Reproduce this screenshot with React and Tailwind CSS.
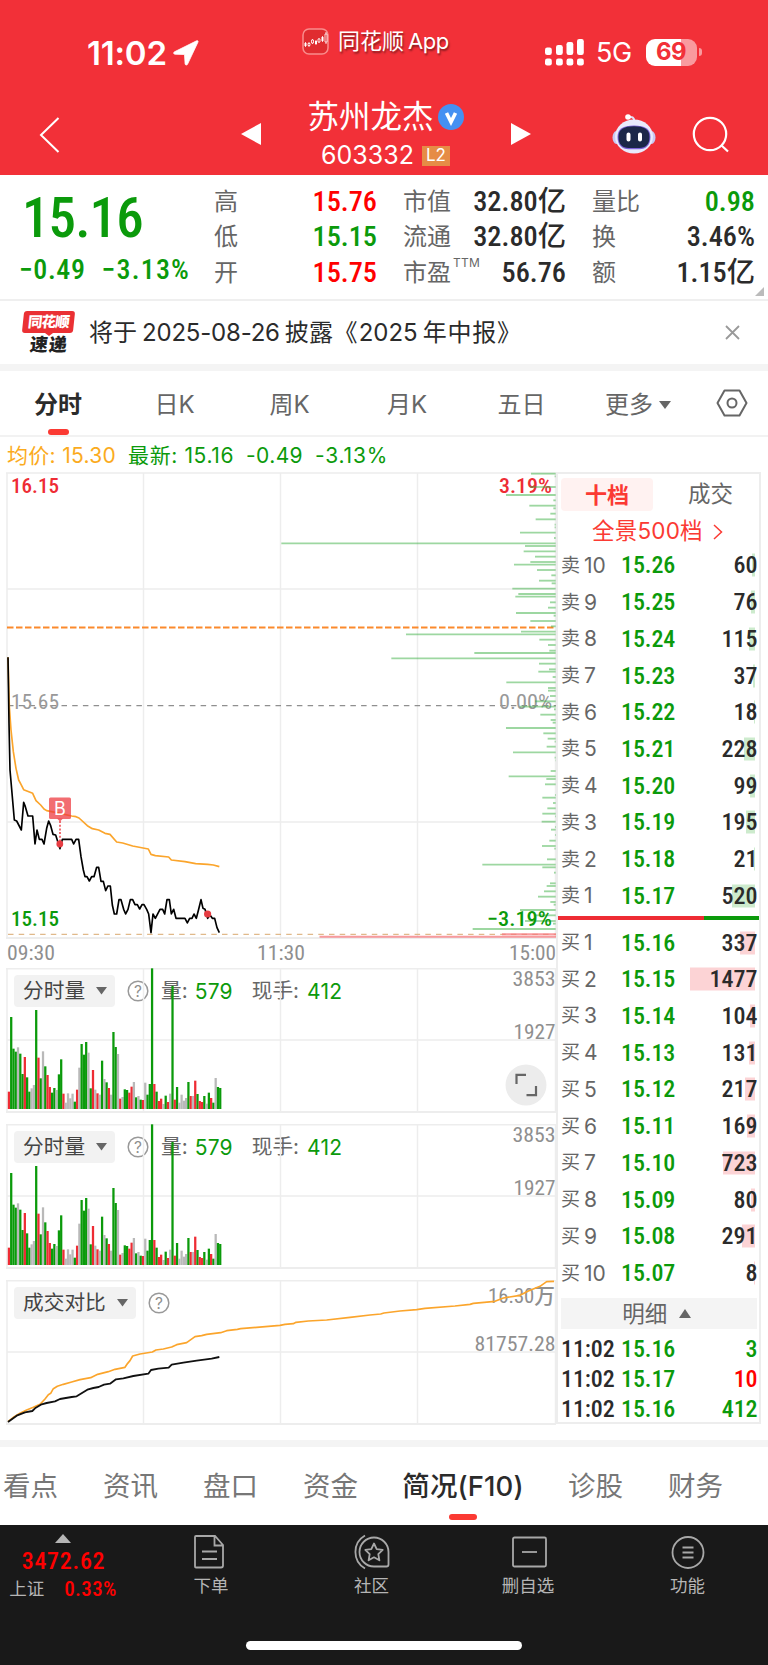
import React from "react";

const sans = "font-['Inter','Noto_Sans_CJK_SC',sans-serif]";
const din = "font-['Roboto','Noto_Sans_CJK_SC',sans-serif] font-stretch-semi-condensed";

const GREEN = "#0b9a0b";
const RED = "#ee2c34";
const GRAY = "#b9b9b9";

const stats = [
  [
    { label: "高", value: "15.76", color: "text-[#ff0000]" },
    { label: "低", value: "15.15", color: "text-[#0b9a0b]" },
    { label: "开", value: "15.75", color: "text-[#ff0000]" },
  ],
  [
    { label: "市值", value: "32.80亿", color: "text-[#2b2b2b]" },
    { label: "流通", value: "32.80亿", color: "text-[#2b2b2b]" },
    { label: "市盈", sup: "TTM", value: "56.76", color: "text-[#2b2b2b]" },
  ],
  [
    { label: "量比", value: "0.98", color: "text-[#0b9a0b]" },
    { label: "换", value: "3.46%", color: "text-[#2b2b2b]" },
    { label: "额", value: "1.15亿", color: "text-[#2b2b2b]" },
  ],
];

const sells = [
  [10, "15.26", 60],
  [9, "15.25", 76],
  [8, "15.24", 115],
  [7, "15.23", 37],
  [6, "15.22", 18],
  [5, "15.21", 228],
  [4, "15.20", 99],
  [3, "15.19", 195],
  [2, "15.18", 21],
  [1, "15.17", 520],
];

const buys = [
  [1, "15.16", 337],
  [2, "15.15", 1477],
  [3, "15.14", 104],
  [4, "15.13", 131],
  [5, "15.12", 217],
  [6, "15.11", 169],
  [7, "15.10", 723],
  [8, "15.09", 80],
  [9, "15.08", 291],
  [10, "15.07", 8],
];

const trades = [
  ["11:02", "15.16", 3, "text-[#0b9a0b]"],
  ["11:02", "15.17", 10, "text-[#ff0000]"],
  ["11:02", "15.16", 412, "text-[#0b9a0b]"],
];

// one entry per minute: r = up, g = down, n = flat
const volumes =
  "r52 g276 g181 g172 n185 g166 g105 r156 g95 g52 n62 n72 g297 r154 g92 n173 g128 r102 r66 g49 g63 n57 g104 g149 r46 n19 n47 n32 n46 g22 r58 n124 g195 g163 g201 n169 g62 r117 n58 r47 n43 g145 n90 g80 r63 n43 g231 g186 n165 r31 n36 g59 g57 r49 r67 n81 g35 n39 g28 r27 n79 g43 g75 g422 r75 g52 r24 r31 n15 g40 r21 n46 g369 r28 g66 n19 n43 n25 n33 g81 r39 n39 r85 g45 r24 r21 g39 n16 g49 r33 g19 n93 g66 g63"
    .split(" ")
    .map((s) => ({ kind: s[0], size: Number(s.slice(1)) / 3 }));

const volumeColors = { r: RED, g: GREEN, n: GRAY };

const pricePoints =
  "24,52 27,250 30,390 43,540 50,543 64,570 71,487 76,500 84,528 98,528 105,612 111,570 118,598 126,598 132,612 140,565 146,543 152,557 159,583 167,585 180,626 187,598 215,598 221,612 228,598 236,598 243,650 250,690 255,710 261,710 268,723 275,710 282,710 290,682 296,682 303,724 310,724 317,752 324,738 331,738 337,795 343,822 350,822 357,779 363,779 371,808 377,822 384,808 391,779 398,779 405,794 412,794 419,807 426,794 432,794 440,808 446,822 453,878 459,822 466,835 480,808 488,808 494,822 501,779 508,779 514,822 521,808 528,835 555,835 562,849 569,835 576,835 582,822 589,835 596,808 603,779 609,805 615,808 623,835 630,825 637,835 644,835 651,863 658,878";

const averagePoints =
  "24,52 28,200 33,270 40,335 48,385 56,420 63,433 71,449 98,460 108,482 122,495 132,507 140,512 180,520 215,528 228,530 237,534 262,557 277,566 296,570 315,580 330,583 350,606 368,609 398,618 445,627 453,643 466,647 506,651 514,660 555,665 587,671 623,673 640,675 658,680";

const yesterdayPoints =
  "24,485 40,472 60,460 80,450 100,442 120,433 135,417 145,404 152,400 160,386 172,379 190,373 215,366 240,359 272,353 293,343 325,335 345,328 375,322 383,310 390,302 398,288 420,282 457,276 468,270 490,267 515,261 530,254 560,248 585,230 605,227 620,223 662,218 680,212 712,208 722,206 770,202 840,196 855,193 880,191 888,187 925,183 980,180 1050,172 1110,165 1142,162 1152,159 1200,153 1250,149 1275,145 1365,138 1410,133 1420,130 1485,124 1510,114 1560,106 1585,93 1620,79 1640,65 1662,64";

const todayPoints =
  "24,486 50,467 75,457 97,453 105,445 125,433 140,429 165,424 180,417 215,411 230,409 262,389 280,384 296,381 312,374 330,371 348,358 370,355 400,348 445,341 453,330 475,326 506,323 515,314 550,308 590,302 635,296 658,291";

// resting orders by price level: [y, left end]
const depth = [
  [41, 783], [49, 854], [81, 780], [105, 708], [121, 850], [137, 778], [145, 850], [161, 841],
  [178, 797], [194, 854], [202, 854], [218, 750], [234, 852], [250, 34], [258, 765], [274, 761],
  [290, 795], [306, 781], [314, 732], [330, 801], [346, 844], [362, 807], [370, 845], [386, 727],
  [402, 745], [410, 736], [427, 840], [443, 834], [459, 738], [467, 851], [483, 781], [499, 843],
  [515, 753], [523, 408], [539, 808], [555, 834], [572, 838], [579, 613], [595, 364], [611, 807],
  [628, 837], [635, 805], [651, 848], [667, 709], [684, 834], [692, 834], [708, 840], [724, 795],
  [740, 749], [748, 852], [764, 811], [780, 842], [788, 848], [804, 708], [820, 820], [836, 833],
  [845, 854], [860, 830], [877, 729], [893, 854], [901, 856], [933, 842], [949, 716], [957, 829],
  [973, 825], [1005, 855], [1013, 817], [1029, 849], [1045, 832], [1061, 817], [1069, 855],
  [1085, 815], [1101, 855], [1109, 843], [1125, 855], [1142, 838], [1158, 816], [1166, 853],
  [1198, 831], [1214, 637], [1222, 817], [1238, 852], [1270, 840], [1278, 830], [1294, 822],
  [1310, 804], [1326, 841], [1334, 851], [1350, 750], [1366, 795], [1383, 765], [1391, 849],
  [1407, 608],
];

function StatusBar() {
  return (
    <div className="flex h-[86px] items-start text-white">
      <div className="mt-[37px] flex h-8 w-[302px] items-center pl-[87px]">
        <span className="text-[33px] leading-8 font-semibold tracking-[-0.2px]">11:02</span>
        <svg className="ml-1.5" width="26" height="26" viewBox="0 0 26 26">
          <path d="M25 2 14.500 24.300c-.6 1.200-2.300.9-2.400-.5L11.500 14.500 2 14.200c-1.600-.1-1.900-1.700-.5-2.400L23.600.8c1-.5 1.800.2 1.400 1.200Z" fill="#fff" stroke="#fff" strokeWidth="0.8" />
        </svg>
      </div>
      <div className="mt-[27px] flex h-7 w-[242px] items-center">
        <svg width="27" height="27" viewBox="0 0 27 27">
          <rect x="1" y="1" width="25" height="25" rx="6" fill="#e02c30" stroke="#f98c8c" strokeWidth="1.5" />
          <path d="M3.500 14v5M7 14v5M10.500 11v5M14 12v5M17 10v5M20.500 8v6M24 4v12" stroke="#fff" strokeWidth="0.8" />
          <path d="M2.500 15h2v3h-2zM13 13h2v3h-2zM19.500 9h2v4h-2z" fill="#fff" />
          <path d="M6 15.500h2v2h-2zM9.500 12h2v3h-2zM16 11h2v3h-2zM23 6h2v8h-2z" fill="#e02c30" stroke="#fff" strokeWidth="0.8" />
        </svg>
        <span className="ml-[9px] flex gap-1 text-[22px] leading-7 [text-shadow:1px_2px_2px_rgba(0,0,0,0.45)]">
          <span>同花顺</span>
          <span className="tracking-[-0.4px]">App</span>
        </span>
      </div>
      <div className="mt-9 flex h-8 items-center">
        <svg width="40" height="28" viewBox="0 0 40 28" fill="#fff">
          <rect x="1" y="9.500" width="6.800" height="7.500" rx="2.200" />
          <rect x="12" y="7" width="6.800" height="10" rx="2.200" />
          <rect x="22.500" y="4" width="6.800" height="13" rx="2.200" />
          <rect x="33" y="1" width="6.800" height="16" rx="2.200" />
          <rect x="1" y="20.500" width="6.800" height="7" rx="2.200" />
          <rect x="12" y="20.500" width="6.800" height="7" rx="2.200" />
          <rect x="22.500" y="20.500" width="6.800" height="7" rx="2.200" />
          <rect x="33" y="20.500" width="6.800" height="7" rx="2.200" />
        </svg>
        <span className="mt-0.5 ml-3 text-[27px] leading-8 tracking-[-0.5px]">5G</span>
        <div className="ml-3.5 flex h-[27px] w-[51px] items-center justify-center rounded-[9px] bg-linear-to-r from-white from-69% to-[#f99a9e] to-69% text-[24px] leading-none font-bold tracking-[-0.5px] text-[#f23038]">
          69
        </div>
        <div className="ml-0.5 h-2 w-[3px] rounded-r-full bg-[#f99a9e]" />
      </div>
    </div>
  );
}

function NavBar() {
  return (
    <div className="flex h-[89px] items-start text-white">
      <svg className="mt-[30px] ml-[39px]" width="22" height="38" viewBox="0 0 22 38">
        <path d="M19.500 2 2 19 19.500 36" fill="none" stroke="#fff" strokeWidth="2" />
      </svg>
      <svg className="mt-[37px] ml-[180px]" width="20" height="22" viewBox="0 0 20 22">
        <path d="M20 0v22L0 11Z" fill="#fff" />
      </svg>
      <div className="flex w-[249px] flex-col items-center">
        <div className="mt-[13px] flex h-9 items-center">
          <span className="text-[31.500px] leading-9">苏州龙杰</span>
          <svg className="ml-1" width="26" height="26" viewBox="0 0 26 26">
            <circle cx="13" cy="13" r="13" fill="#4590f2" />
            <path d="M8.500 9 13 18l4.500-9" fill="none" stroke="#fff" strokeWidth="3.600" />
          </svg>
        </div>
        <div className="mt-1.5 flex h-7 items-center">
          <span className="text-[25px] leading-7">603332</span>
          <span className="mt-0.5 ml-2 flex h-5 w-7 items-center justify-center bg-[#e68c46] text-[17px]">L2</span>
        </div>
      </div>
      <svg className="mt-[37px] ml-px" width="20" height="22" viewBox="0 0 20 22">
        <path d="M0 0v22L20 11Z" fill="#fff" />
      </svg>
      <svg className="mt-[27px] ml-[81px]" width="44" height="42" viewBox="0 0 44 42">
        <path d="M16 4.500c4-1.500 6 0 6.500 4" fill="none" stroke="#dfe3fa" strokeWidth="2" />
        <circle cx="16" cy="4" r="2.800" fill="#fff" />
        <ellipse cx="4.500" cy="24.500" rx="4" ry="6.500" fill="#c9c9f4" />
        <ellipse cx="39.500" cy="24.500" rx="4" ry="6.500" fill="#c9c9f4" />
        <ellipse cx="22" cy="23.500" rx="19" ry="17" fill="#e9eafc" />
        <path d="M22 12.500c11 0 16.500 3.500 16.500 11.500s-4.500 12.200-11 12.200h-11C10 36.200 5.500 32 5.500 24S11 12.500 22 12.500Z" fill="#7d63d8" />
        <path d="M22 13.300c10.500 0 15.500 3.200 15.500 10.700S33.500 35 27.500 35h-11C10.500 35 6.500 31.500 6.500 24S11.500 13.300 22 13.300Z" fill="#1c2748" />
        <path d="M16.500 21.500v5M28 21.500v5" stroke="#fff" strokeWidth="4" strokeLinecap="round" />
      </svg>
      <svg className="mt-[30px] ml-9" width="38" height="38" viewBox="0 0 38 38" fill="none" stroke="#fff" strokeWidth="2.200">
        <circle cx="18" cy="18" r="16.200" />
        <path d="m29 29 7 6.500" />
      </svg>
    </div>
  );
}

function Stats() {
  return (
    <div className="relative flex h-[124px]">
      <div className={`w-[213px] text-[#0b9a0b] ${din}`}>
        <div className="mt-[15px] pl-[22px] text-[55px] leading-[56px] font-medium tracking-[-0.9px]">15.16</div>
        <div className="mt-[9px] flex gap-4 pl-[19px] text-[28px] leading-[30px] font-medium">
          <span className="tracking-[0.6px]">−0.49</span>
          <span className="tracking-[1.2px]">−3.13%</span>
        </div>
      </div>
      <div className="flex gap-[26px] pt-[9px] pl-px">
        {stats.map((column, i) => (
          <div key={i} className="w-[163px]">
            {column.map((item) => (
              <div key={item.label} className="flex h-[35.500px] items-center justify-between">
                <span className="flex text-[24px] leading-none text-[#666]">
                  {item.label}
                  {item.sup && (
                    <sup className="top-0 -mt-1 ml-0.5 text-[12px] leading-none tracking-[0.3px]">{item.sup}</sup>
                  )}
                </span>
                <span className={`text-[28.300px] leading-none font-medium ${din} ${item.color}`}>{item.value}</span>
              </div>
            ))}
          </div>
        ))}
      </div>
      <svg className="absolute right-1 bottom-[3px]" width="9" height="9" viewBox="0 0 9 9">
        <path d="M9 0v9H0Z" fill="#bbb" />
      </svg>
    </div>
  );
}

function Notice() {
  return (
    <div className="flex h-[65px] items-center border-t-2 border-[#efefef]">
      <div className="ml-[22px] flex w-[53px] flex-col items-center">
        <div className="flex h-[22px] w-[51px] -skew-x-6 items-center justify-center rounded-[3px] bg-[#ea3034] text-[14.500px] leading-none font-black tracking-[-0.8px] text-white">
          同花顺
        </div>
        <svg width="8" height="3" viewBox="0 0 8 3">
          <path d="M0 0h8L4 3Z" fill="#ea3034" />
        </svg>
        <div className="-skew-x-6 text-[18px] leading-[18px] font-black tracking-[1px] text-[#222]">速递</div>
      </div>
      <div className="ml-3.5 flex items-center gap-[5px] text-[24px] leading-none text-[#2b2b2b]">
        <span>将于</span>
        <span className="tracking-[-0.2px]">2025-08-26</span>
        <span className="tracking-[0.3px]">披露《</span>
        <span className="-ml-1">2025</span>
        <span className="tracking-[0.8px]">年中报》</span>
      </div>
      <svg className="mr-7 ml-auto" width="15" height="15" viewBox="0 0 15 15">
        <path d="m1 1 13 13M14 1 1 14" stroke="#999" strokeWidth="1.800" />
      </svg>
    </div>
  );
}

function PeriodTabs() {
  return (
    <div className="flex h-[66px] items-start border-b-2 border-[#f2f2f2] pt-5 text-[24px] leading-[27px] text-[#666]">
      <div className="flex w-[116px] flex-col items-center font-bold text-[#2b2b2b]">
        <span>分时</span>
        <div className="mt-[11px] h-1.5 w-[21px] rounded-full bg-[#fb3a33]" />
      </div>
      <div className="w-[117px] text-center">日K</div>
      <div className="w-[113px] text-center">周K</div>
      <div className="w-[122px] text-center">月K</div>
      <div className="w-[107px] text-center">五日</div>
      <div className="ml-[30px] flex items-center">
        更多
        <svg className="ml-1.5" width="12" height="8" viewBox="0 0 12 8">
          <path d="M0 0h12L6 8Z" fill="#666" />
        </svg>
      </div>
      <svg className="mt-[-2px] ml-[45px]" width="32" height="28" viewBox="0 0 32 28" fill="none" stroke="#666" strokeWidth="2">
        <path d="M8.500 1.500h15L30.500 14l-7 12.500h-15L1.500 14Z" strokeLinejoin="round" />
        <circle cx="16" cy="14" r="4.500" />
      </svg>
    </div>
  );
}

function Label({ x, y, width, size = 21, color = "#8f8f8f", weight = 450, children }) {
  return (
    <text
      className={din}
      x={x}
      y={y}
      fontSize={size}
      fill={color}
      fontWeight={weight}
      textLength={width}
      lengthAdjust="spacingAndGlyphs"
    >
      {children}
    </text>
  );
}

function Grid({ top, bottom, rows }) {
  return (
    <g stroke="#ededed" strokeWidth="1.5" fill="none">
      <path d={`M7 ${top}V${bottom}M143.5 ${top}V${bottom}M280.5 ${top}V${bottom}M417.5 ${top}V${bottom}M555.5 ${top}V${bottom}`} />
      <path d={`M6 ${top}H556`} />
      {rows.map((y) => (
        <path key={y} d={`M7 ${y}H556`} />
      ))}
      <path d={`M6 ${bottom}H556`} strokeWidth="2" />
    </g>
  );
}

function PriceChart() {
  return (
    <svg className="block" width="556" height="496" viewBox="0 472 556 496">
      <Grid top={473} bottom={938} rows={[589, 822]} />
      <path d="M8 705.700H556" stroke="#8f8f8f" strokeWidth="1.300" strokeDasharray="5.500 5.200" />
      <Label x={11} y={709} width={48} color="#999">15.65</Label>
      <Label x={499} y={709} width={53} color="#999">0.00%</Label>
      <Label x={11} y={493} width={48} color={RED} weight={500}>16.15</Label>
      <Label x={499} y={493} width={53} color={RED} weight={500}>3.19%</Label>
      <path d="M7 627.500H554" stroke="#fb8a2c" strokeWidth="1.900" strokeDasharray="6.500 2.500" />
      <g transform="translate(270 460) scale(.33333)" stroke="#3cb043" strokeOpacity=".5" strokeWidth="5.500">
        {depth.map(([y, x]) => (
          <path key={y} d={`M${x} ${y}H857`} />
        ))}
      </g>
      <path d="M8 934.300H556" stroke="#e0b98a" strokeWidth="1.200" strokeDasharray="5.500 5.200" />
      <path d="M319.500 936.800H556M502 934.200H556" stroke="#f6787c" strokeOpacity=".75" strokeWidth="2" />
      <Label x={11} y={925.5} width={48} color={GREEN} weight={500}>15.15</Label>
      <Label x={487} y={925.5} width={65} color={GREEN} weight={500}>−3.19%</Label>
      <g transform="translate(0 640) scale(.33333)" fill="none" strokeLinejoin="round">
        <polyline points={averagePoints} stroke="#fba52c" strokeWidth="5" />
        <polyline points={pricePoints} stroke="#000" strokeWidth="5" />
      </g>
      <path d="M60 821v22" stroke="#ee4a50" strokeWidth="1.600" strokeDasharray="2 1.700" />
      <path d="M57 818.500h6l-3 3Z" fill="#f0686c" />
      <rect x="49" y="797.500" width="22" height="21.500" rx="1.500" fill="#ee3c42" fillOpacity=".75" />
      <text className={sans} x="60" y="815" fontSize="18" fill="#fff" textAnchor="middle">B</text>
      <circle cx="59.800" cy="844" r="3.400" fill="#e63c42" />
      <circle cx="207.600" cy="914" r="3.600" fill="#e63c42" />
      <Label x={7} y={959.5} width={48}>09:30</Label>
      <Label x={257} y={959.5} width={48}>11:30</Label>
      <Label x={509} y={959.5} width={47}>15:00</Label>
    </svg>
  );
}

function ChartSelect({ children }) {
  return (
    <div className="flex h-8 items-center gap-[11px] rounded bg-[#f2f2f2] pr-2 pl-[9px] text-[20.700px] leading-none text-[#444]">
      {children}
      <svg width="11" height="8" viewBox="0 0 11 8">
        <path d="M0 0h11L5.500 7.500Z" fill="#666" />
      </svg>
    </div>
  );
}

function HelpIcon() {
  return (
    <svg className="ml-3" width="22" height="22" viewBox="0 0 22 22">
      <circle cx="11" cy="11" r="9.800" fill="none" stroke="#999" strokeWidth="1.500" />
      <text className={sans} x="11" y="16.500" fontSize="15.500" fill="#8f8f8f" textAnchor="middle">?</text>
    </svg>
  );
}

function VolumeChart({ expandable }) {
  return (
    <div className="relative h-[156px] pt-[7px]">
      <div className="flex items-center pl-3.5 text-[20.700px] leading-none text-[#666]">
        <ChartSelect>分时量</ChartSelect>
        <HelpIcon />
        <span className="ml-3">量:</span>
        <span className="ml-[7px] w-[57px] text-[21px] tracking-[0.2px] text-[#0b9a0b]">579</span>
        <span>现手:</span>
        <span className="ml-2 text-[21px] tracking-[0.2px] text-[#0b9a0b]">412</span>
      </div>
      <svg className="absolute top-0 left-0" width="556" height="146" viewBox="0 0 556 146">
        <Grid top={0.7} bottom={144} rows={[72]} />
        {volumes.map((bar, i) => (
          <rect
            key={i}
            x={7.8 + i * 2.272}
            y={141 - bar.size}
            width="2.27"
            height={bar.size}
            fill={volumeColors[bar.kind]}
          />
        ))}
        <Label x={512.5} y={18} width={43}>3853</Label>
        <Label x={513.5} y={71} width={42}>1927</Label>
      </svg>
      {expandable && (
        <svg className="absolute top-24 left-[505px]" width="42" height="42" viewBox="0 0 42 42">
          <circle cx="21" cy="21" r="20.500" fill="#ececec" />
          <path d="M11.500 20v-9.200h9.500M31 22v9.200H21.500" fill="none" stroke="#666" strokeWidth="2.200" />
        </svg>
      )}
    </div>
  );
}

function CompareChart() {
  return (
    <div className="relative h-[146px] pt-[7px]">
      <div className="flex items-center pl-3.5">
        <ChartSelect>成交对比</ChartSelect>
        <HelpIcon />
      </div>
      <svg className="absolute top-0 left-0" width="556" height="146" viewBox="0 1280 556 146">
        <Grid top={1280.7} bottom={1424} rows={[1352]} />
        <Label x={488} y={1303} width={67}>16.30万</Label>
        <Label x={474.5} y={1350.5} width={81}>81757.28</Label>
        <g transform="translate(0 1260) scale(.33333)" fill="none" strokeLinejoin="round">
          <polyline points={yesterdayPoints} stroke="#fba52c" strokeWidth="5" />
          <polyline points={todayPoints} stroke="#111" strokeWidth="5.500" />
        </g>
      </svg>
    </div>
  );
}

function OrderRow({ side, order }) {
  const [level, price, amount] = order;
  return (
    <div className="flex h-[36.730px] items-center">
      <span className="flex w-[60px] items-center gap-1 text-[19px] leading-none text-[#666]">
        {side}
        <span className="text-[21px]">{level}</span>
      </span>
      <span className={`text-[24px] leading-none font-medium tracking-[-0.1px] text-[#0b9a0b] ${din}`}>{price}</span>
      <div className={`relative ml-auto text-[24px] leading-none font-medium text-[#2b2b2b] ${din}`}>
        <span
          className={`absolute top-1/2 right-[3px] h-[23px] -translate-y-1/2 ${side === "卖" ? "bg-[#cdebcd]" : "bg-[#fcd3d5]"}`}
          style={{ width: (amount / 1477) * 65 }}
        />
        <span className="relative">{amount}</span>
      </div>
    </div>
  );
}

function OrderBook() {
  return (
    <div className="h-[952px] w-[204.500px] border-2 border-[#ededed] text-[22px] leading-none">
      <div className="flex pt-1 pl-[3px]">
        <div className="flex h-[33px] w-[92px] items-center justify-center rounded bg-[#fff2f1] font-bold text-[#fb3a33]">
          十档
        </div>
        <div className="ml-[35px] flex h-[33px] items-center text-[22.500px] text-[#666]">成交</div>
      </div>
      <div className="flex h-[35px] items-center pt-1.5 pl-[34px] text-[22.500px] tracking-[0.2px] text-[#fb3a33]">
        全景500档
        <svg className="ml-2.5" width="10" height="16" viewBox="0 0 10 16">
          <path d="m1 1 7.500 7L1 15" fill="none" stroke="#fb3a33" strokeWidth="1.500" />
        </svg>
      </div>
      <div className="pt-px pr-[1px] pl-[3px]">
        {sells.map((order) => (
          <OrderRow key={order[0]} side="卖" order={order} />
        ))}
      </div>
      <div className="mt-0.5 mb-1 flex h-1">
        <div className="w-[146px] bg-[#ee2c34]" />
        <div className="flex-1 bg-[#0b9a0b]" />
      </div>
      <div className="pr-[1px] pl-[3px]">
        {buys.map((order) => (
          <OrderRow key={order[0]} side="买" order={order} />
        ))}
      </div>
      <div className="mt-[7px] mr-0.5 ml-[3px] flex h-[31px] items-center justify-center gap-3 bg-[#f4f4f4] pr-1 text-[22.500px] text-[#666]">
        明细
        <svg width="12" height="9" viewBox="0 0 12 9">
          <path d="M0 9h12L6 0Z" fill="#666" />
        </svg>
      </div>
      <div className={`pt-1 pr-[1px] pl-[3px] text-[24px] font-medium tracking-[-0.1px] ${din}`}>
        {trades.map(([time, price, amount, color], i) => (
          <div key={i} className="flex h-[30.300px] items-center">
            <span className="w-[60px] text-[#2b2b2b]">{time}</span>
            <span className="text-[#0b9a0b]">{price}</span>
            <span className={`ml-auto ${color}`}>{amount}</span>
          </div>
        ))}
      </div>
    </div>
  );
}

function SectionTabs() {
  return (
    <div className="flex h-[78px] gap-[45px] overflow-hidden pt-[25px] pl-[3px] text-[27.500px] leading-[29px] whitespace-nowrap text-[#777]">
      <span>看点</span>
      <span>资讯</span>
      <span>盘口</span>
      <span>资金</span>
      <div className="flex w-[120px] flex-col items-center font-medium text-[#2b2b2b]">
        <span className="tracking-[0.1px]">简况(F10)</span>
        <div className="mt-[13px] h-1.5 w-7 rounded-full bg-[#fb3a33]" />
      </div>
      <span>诊股</span>
      <span>财务</span>
    </div>
  );
}

function BottomItem({ label, className, children }) {
  return (
    <div className={`flex flex-col items-center text-[17.500px] leading-5 text-[#b5b5b5] ${className}`}>
      <svg className="mb-1.5" width="38" height="36" viewBox="0 0 38 36" fill="none" stroke="#a8a8a8" strokeWidth="1.800">
        {children}
      </svg>
      {label}
    </div>
  );
}

function BottomBar() {
  return (
    <div className="flex h-[140px] flex-col items-center justify-between bg-[#191919] pb-[15px]">
      <div className="flex w-full pt-[9px]">
        <div className={`flex w-[127px] flex-col items-center text-[#ff0000] ${din}`}>
          <svg className="mr-0.5" width="16" height="9" viewBox="0 0 16 9">
            <path d="M0 9h16L8 0Z" fill="#b5b5b5" />
          </svg>
          <div className="mt-1 text-[24px] leading-7 font-medium tracking-[0.7px]">3472.62</div>
          <div className="mt-0.5 flex items-center gap-5 pr-px text-[21px] leading-6 font-medium tracking-[0.4px]">
            <span className="text-[17.500px] font-normal tracking-normal text-[#b5b5b5]">上证</span>
            0.33%
          </div>
        </div>
        <BottomItem label="下单" className="w-[168px]">
          <path d="M4 2h19l8 9v20.500a2 2 0 0 1-2 2h-25a1 1 0 0 1-1-1V3a1 1 0 0 1 1-1ZM22.500 2.500V11.500H31M10 17.500h15M10 25h15" />
        </BottomItem>
        <BottomItem label="社区" className="w-[153px]">
          <path d="M21 3.500a14.500 14.500 0 0 1 14.500 14.500v12.500a2 2 0 0 1-2 2H21a14.500 14.500 0 0 1 0-29ZM12 1.500a19 19 0 0 0 0 33" />
          <path d="m21 9.500 2.700 5.600 6 .8-4.400 4.300 1.100 6.100-5.400-3-5.400 3 1.100-6.100-4.400-4.300 6-.8Z" strokeLinejoin="round" />
        </BottomItem>
        <BottomItem label="删自选" className="w-[160px]">
          <rect x="4" y="3.500" width="33" height="29" rx="1.500" />
          <path d="M13 18h15" />
        </BottomItem>
        <BottomItem label="功能" className="w-[159px]">
          <circle cx="19" cy="18.500" r="15.500" />
          <path d="M13.500 13.500h11M13.500 18.500h11M13.500 23.500h11" />
        </BottomItem>
      </div>
      <div className="h-[9px] w-[276px] rounded-full bg-white" />
    </div>
  );
}

function App() {
  return (
    <div className={`w-[768px] overflow-hidden bg-white ${sans}`}>
      <div className="bg-[#f23038]">
        <StatusBar />
        <NavBar />
      </div>
      <Stats />
      <Notice />
      <div className="h-[7px] bg-[#f4f4f4]" />
      <PeriodTabs />
      <div className="flex h-[35px] items-center pt-px pl-[7px] text-[21px] leading-none text-[#0b9a0b]">
        <span className="mr-3 tracking-[0.3px] text-[#fbab1e]">均价: 15.30</span>
        <span className="mr-3 tracking-[0.6px]">最新: 15.16</span>
        <span className="mr-3 tracking-[0.4px]">-0.49</span>
        <span className="tracking-[0.8px]">-3.13%</span>
      </div>
      <div className="flex h-[968px]">
        <div className="w-[556px]">
          <PriceChart />
          <VolumeChart expandable />
          <VolumeChart />
          <CompareChart />
        </div>
        <OrderBook />
      </div>
      <div className="h-[7px] bg-[#f4f4f4]" />
      <SectionTabs />
      <BottomBar />
    </div>
  );
}

export default App;
